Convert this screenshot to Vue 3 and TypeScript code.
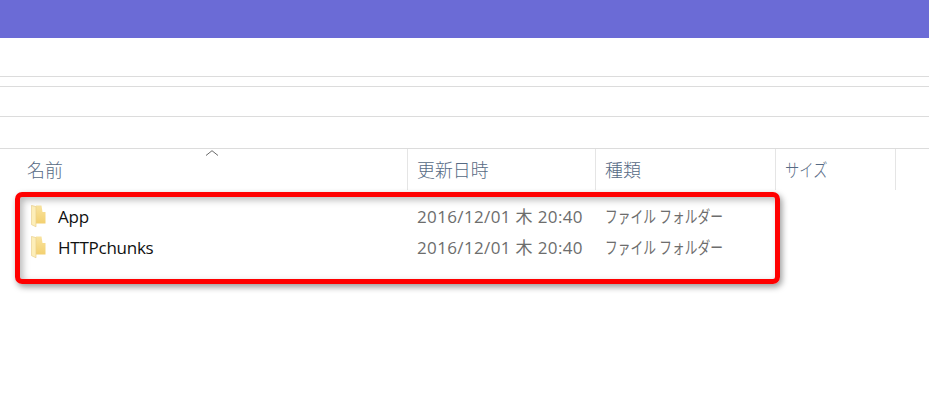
<script setup lang="ts">
interface Row { name: string; date: string; kind: string }
const rows: Row[] = [
  { name: 'App', date: '2016/12/01 木 20:40', kind: 'ファイル フォルダー' },
  { name: 'HTTPchunks', date: '2016/12/01 木 20:40', kind: 'ファイル フォルダー' },
]
const columns: string[] = ['名前', '更新日時', '種類', 'サイズ']
</script>

<template>
  <div class="page">
    <div class="banner"></div>
    <div class="bar bar-a"></div>
    <div class="bar bar-b"></div>
    <div class="bar bar-c"></div>
    <div class="bar bar-d"></div>
    <div class="head">
      <svg class="sort" width="14" height="6" viewBox="0 0 14 6" aria-hidden="true">
        <path d="M1 5.5 L7 .7 L13 5.5" fill="none" stroke="#6a6a6a" stroke-width="1" />
      </svg>
      <div v-for="c in columns" :key="c" class="col">
        <span class="col-text" :class="{ narrow: c === 'サイズ' }">{{ c }}</span>
      </div>
    </div>
    <div class="list">
      <div class="frame"></div>
      <div v-for="r in rows" :key="r.name" class="row">
        <div class="name">
          <svg class="folder" width="15" height="23" viewBox="0 0 15 23" aria-hidden="true">
            <defs>
              <linearGradient id="fg" x1="0" y1="0" x2="0" y2="1">
                <stop offset="0" stop-color="#f9e4a0" />
                <stop offset="1" stop-color="#f3d070" />
              </linearGradient>
            </defs>
            <path d="M5 .5 H10.5 L11.5 7 H14.5 V18.5 H5 Z" fill="url(#fg)" />
            <path d="M.4 .4 L5 1.6 V21.8 L.4 19.6 Z" fill="#fdeeb8" stroke="#e9d08e" stroke-width=".7" />
          </svg>
          <span class="label">{{ r.name }}</span>
        </div>
        <div class="cell date">{{ r.date }}</div>
        <div class="cell kind"><span class="kind-text">{{ r.kind }}</span></div>
      </div>
    </div>
  </div>
</template>

<style>
html, body { margin: 0; background: #fff; }
</style>

<style scoped>
.page {
  width: 929px;
  height: 419px;
  overflow: hidden;
  background: #fff;
  font-family: "Open Sans", "Noto Sans CJK JP", sans-serif;
  font-size: 17px;
}
.banner { height: 38px; background: #6b6bd6; }
.bar { border-bottom: 1px solid #dcdcdc; box-sizing: border-box; }
.bar-a { height: 39px; }
.bar-b { height: 10px; }
.bar-c { height: 30px; }
.bar-d { height: 32px; }
.head {
  position: relative;
  display: grid;
  grid-template-columns: 408px 188px 180px 120px;
  height: 41px;
}
.sort { position: absolute; left: 205px; top: 1px; }
.col {
  padding: 8px 0 0 9px;
  color: #566a84;
  font-size: 17.9px;
  font-weight: 300;
  line-height: 26px;
  border-right: 1px solid #e5e5e5;
  box-sizing: border-box;
}
.col:first-of-type { padding-left: 27px; }
.col-text { display: inline-block; white-space: nowrap; }
.narrow { transform: scaleX(.8); transform-origin: left center; }
.list {
  position: relative;
  padding-top: 11px;
}
.frame {
  position: absolute;
  left: 15px;
  top: 2px;
  width: 765px;
  height: 92px;
  box-sizing: border-box;
  border: 5px solid #ff0000;
  border-radius: 7px;
  box-shadow: 2px 3px 6px rgba(0, 0, 0, .4), inset 3px 3px 7px rgba(0, 0, 0, .28);
}
.row {
  display: grid;
  grid-template-columns: 408px 188px 180px;
  height: 31px;
  line-height: 31px;
}
.name { display: flex; align-items: center; padding-left: 31px; }
.folder { flex: none; }
.label { margin-left: 12px; color: #111; letter-spacing: -.25px; }
.cell { padding-left: 9px; color: #6d6d6d; white-space: nowrap; }
.date { letter-spacing: .36px; }
.kind-text { display: inline-block; transform: scaleX(.75); transform-origin: left center; }
</style>
